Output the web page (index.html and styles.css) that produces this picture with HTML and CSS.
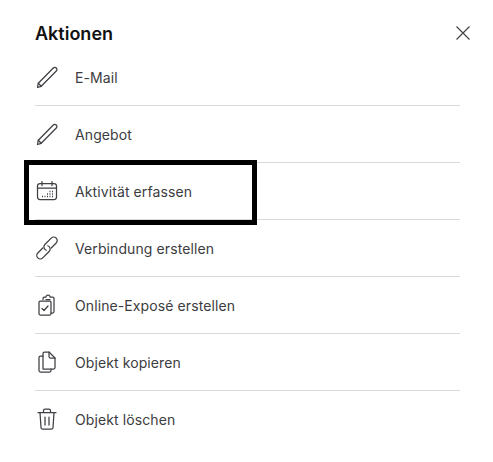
FILE: index.html
```html
<!DOCTYPE html>
<html lang="de">
<head>
  <meta charset="UTF-8">
  <meta name="viewport" content="width=device-width, initial-scale=1.0">
  <title>Aktionen</title>
  <link rel="stylesheet" href="styles.css">
</head>
<body>
  <div class="panel">
    <div class="panel-head">
      <h2 class="panel-title">Aktionen</h2>
      <button type="button" class="panel-close" aria-label="Schließen">
        <svg width="14" height="14" viewBox="0 0 14 14"><path d="M.5.5l13 13M13.5.5l-13 13"/></svg>
      </button>
    </div>
    <ul class="actions">
      <li class="action">
        <svg class="icon" viewBox="0 0 24 24"><path d="M2.500 22.500l.8-4.300L18.300 3a2.100 2.100 0 0 1 3 0 2.100 2.100 0 0 1 0 3L6.200 21.300z"/><path d="M3.300 18.200l2.900 3.100"/></svg>
        <span>E-Mail</span>
      </li>
      <li class="action">
        <svg class="icon" viewBox="0 0 24 24"><path d="M2.500 22.500l.8-4.300L18.300 3a2.100 2.100 0 0 1 3 0 2.100 2.100 0 0 1 0 3L6.200 21.300z"/><path d="M3.300 18.200l2.900 3.100"/></svg>
        <span>Angebot</span>
      </li>
      <li class="action action-marked">
        <svg class="icon" viewBox="0 0 24 24"><rect x="2.500" y="4.500" width="19" height="16" rx="2.500"/><path d="M2.500 9h19M7 2.500v4M17 2.500v4"/><path class="icon-dots" d="M7 17.500h1M9.500 17.500h1M12 17.500h1M14.500 17.500h1M17 17.500h1M12 15h1M14.500 15h1M17 15h1M14.500 12.500h1M17 12.500h1"/></svg>
        <span>Aktivität erfassen</span>
      </li>
      <li class="action">
        <svg class="icon" viewBox="0 0 24 24"><g transform="rotate(-45 12 12)"><path d="M9 9H2a3.500 3.500 0 0 0 0 7H11a3.500 3.500 0 0 0 3.200-5"/><path d="M15 15H22a3.500 3.500 0 0 0 0-7H13a3.500 3.500 0 0 0-3.200 5"/></g></svg>
        <span>Verbindung erstellen</span>
      </li>
      <li class="action">
        <svg class="icon" viewBox="0 0 24 24"><path d="M8 6.500V5.500a1.500 1.500 0 0 1 1.500-1.500H11a2 2 0 0 1 4 0h2.500A1.500 1.500 0 0 1 19 5.500v13a1.500 1.500 0 0 1-1.500 1.500H16"/><path d="M11 6.500h4"/><rect x="4" y="8" width="12" height="14" rx="1.200"/><path d="M7 15.500l2 2 4-4.500"/></svg>
        <span>Online-Exposé erstellen</span>
      </li>
      <li class="action">
        <svg class="icon" viewBox="0 0 24 24"><path d="M8 19V3.500A1.500 1.500 0 0 1 9.500 2H14l6 6v9.500a1.500 1.500 0 0 1-1.500 1.500z"/><path d="M14 2v4.500A1.500 1.500 0 0 0 15.500 8H20"/><path d="M8 6H5.500A1.500 1.500 0 0 0 4 7.500v13A1.500 1.500 0 0 0 5.500 22h9a1.500 1.500 0 0 0 1.500-1.500V19"/></svg>
        <span>Objekt kopieren</span>
      </li>
      <li class="action">
        <svg class="icon" viewBox="0 0 24 24"><path d="M3 5.500h18M8.500 5.500V3.500A1.500 1.500 0 0 1 10 2h4a1.500 1.500 0 0 1 1.500 1.500v2"/><path d="M5 5.500l1 15A1.500 1.500 0 0 0 7.500 22h9a1.500 1.500 0 0 0 1.500-1.500l1-15"/><path d="M10 10v8M14 10v8"/></svg>
        <span>Objekt löschen</span>
      </li>
    </ul>
  </div>
</body>
</html>
```

FILE: styles.css
```css
body {
  margin: 0;
  background: #fff;
  font-family: Inter, "Liberation Sans", sans-serif;
  color: #3c3c41;
}

.panel {
  padding: 18px 23px 0 35px;
}

.panel-head {
  display: flex;
  justify-content: space-between;
  align-items: center;
  height: 30px;
  margin-bottom: 1px;
}

.panel-title {
  margin: 0;
  font-size: 18px;
  font-weight: 600;
  color: #111;
}

.panel-close {
  display: flex;
  padding: 0;
  border: none;
  background: none;
}

.panel-close path {
  fill: none;
  stroke: #444;
  stroke-width: 1.2;
}

.actions {
  margin: 0;
  padding: 0;
  list-style: none;
  width: 425px;
}

.action {
  position: relative;
  display: flex;
  align-items: center;
  gap: 16px;
  height: 56px;
  border-bottom: 1px solid #d9d9d9;
  font-size: 14px;
  letter-spacing: 0.1px;
}

.action:last-child {
  border-bottom: none;
}

.icon {
  width: 24px;
  height: 24px;
  fill: none;
  stroke: #3f3f44;
  stroke-width: 1.25;
  stroke-linecap: round;
  stroke-linejoin: round;
}

.icon-dots {
  stroke-width: 1.3;
  stroke-linecap: butt;
}

/* rahmen um die markierte zeile */
.action-marked::after {
  content: "";
  position: absolute;
  left: -11px;
  top: -3px;
  width: 223px;
  height: 55px;
  border: 5px solid #000;
}
```
